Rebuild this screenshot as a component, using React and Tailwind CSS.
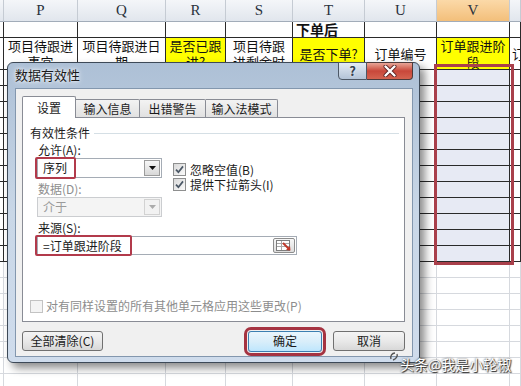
import React from 'react';

// column widths of the visible sheet part (stub, P..V, W)
const COLS = ['w-[4px]', 'w-[74px]', 'w-[88px]', 'w-[60px]', 'w-[67px]', 'w-[72px]', 'w-[72px]', 'w-[73px]', 'w-[11px]'];
const LETTERS = ['', 'P', 'Q', 'R', 'S', 'T', 'U', 'V', ''];
const TITLES = ['', '项目待跟进事宜', '项目待跟进日期', '是否已跟进?', '项目待跟进剩余时', '是否下单?', '订单编号', '订单跟进阶段', '订单金额'];
const YELLOW = [3, 5, 7];

function HeaderRow() {
  return (
    <div className="flex h-[22px]">
      {COLS.map((w, i) => (
        <div
          key={i}
          className={`${w} flex-none flex items-center justify-center border-r border-b border-r-[#c5cbd3] border-b-[#a2acb9] font-['Liberation_Serif',serif] text-[15px] text-[#2a323c] ${
            i === 7 ? 'bg-linear-to-b from-[#fbd9a8] to-[#f3bf7a]' : 'bg-linear-to-b from-[#f4f6f9] to-[#e1e6ed]'
          }`}
        >
          {LETTERS[i]}
        </div>
      ))}
    </div>
  );
}

function Row({ tall, light, sel, children }) {
  return (
    <div className={`flex ${tall ? 'h-[32px]' : 'h-[16px]'}`}>
      {COLS.map((w, i) => (
        <div
          key={i}
          className={`${w} flex-none border-r border-b overflow-hidden ${light ? 'border-[#d6d9de]' : 'border-[#2a2a2a]'} ${
            sel && i === 7 ? 'bg-[#e7eaf4]' : ''
          }`}
        >
          {children && children(i)}
        </div>
      ))}
    </div>
  );
}

function Sheet() {
  return (
    <div className="flex flex-col font-['Noto_Sans_CJK_SC',sans-serif] text-[13px] text-[#111]">
      <HeaderRow />
      <Row>
        {(i) =>
          i === 5 ? <div className="pl-[3px] text-[14px] leading-[15px] font-bold whitespace-nowrap">下单后</div> : null
        }
      </Row>
      <Row tall>
        {(i) =>
          i === 0 ? null : (
            <div
              className={`h-full flex items-center leading-[16px] px-[2px] ${
                i === 8 ? 'justify-start whitespace-nowrap' : 'justify-center text-center break-all'
              } ${YELLOW.includes(i) ? 'bg-[#ffff00]' : ''}`}
            >
              {TITLES[i]}
            </div>
          )
        }
      </Row>
      {Array.from({ length: 12 }).map((_, r) => (
        <Row key={`d${r}`} sel />
      ))}
      {Array.from({ length: 8 }).map((_, r) => (
        <Row key={`l${r}`} light />
      ))}
    </div>
  );
}

function CheckBox({ checked, disabled }) {
  return (
    <span
      className={`w-[13px] h-[13px] flex-none border flex items-center justify-center ${
        disabled ? 'border-[#c3c3c3] bg-[#f4f4f4]' : 'border-[#8e8f8f] bg-linear-to-br from-[#d9d9d9] to-[#fafafa]'
      }`}
    >
      {checked && (
        <svg width="9" height="9" viewBox="0 0 9 9">
          <path d="M1 4.6 L3.4 7.2 L8 1.4" fill="none" stroke="#4b5866" strokeWidth="1.7" />
        </svg>
      )}
    </span>
  );
}

function DropBtn({ disabled }) {
  return (
    <span
      className={`ml-auto w-[16px] h-full flex-none flex items-center justify-center border ${
        disabled ? 'border-[#d2d2d2] bg-[#f2f2f2]' : 'border-[#9c9c9c] bg-linear-to-b from-[#f7f7f7] to-[#d8d8d8]'
      }`}
    >
      <svg width="7" height="4" viewBox="0 0 7 4">
        <path d="M0 0h7L3.5 4z" fill={disabled ? '#ababab' : '#111'} />
      </svg>
    </span>
  );
}

function RangeIcon() {
  return (
    <svg width="17" height="12" viewBox="0 0 17 12">
      <rect x="0.5" y="0.5" width="13" height="10" fill="#fff" stroke="#7d7d7d" />
      <path d="M1 3.5h12M1 6.5h12M5.5 1v9" stroke="#a9a9a9" />
      <path d="M7 3 L13 9" stroke="#c0392b" strokeWidth="2" />
      <path d="M10 10 L14.5 10.5 L14 6 z" fill="#c0392b" />
    </svg>
  );
}

function Dialog() {
  return (
    <div className="absolute left-[7px] top-[62px] w-[413px] h-[301px] rounded-[6px] border border-[#3d4957] bg-linear-to-b from-[#adc0d6] via-[#c9d7e7] to-[#cfdcec] shadow-[5px_5px_8px_rgba(0,0,0,0.45)] flex flex-col pl-[7px] pr-[6px] pb-[5px] font-['Noto_Sans_CJK_SC',sans-serif] text-[12px] leading-[14px] text-[#1b1b1b]">
      {/* title bar */}
      <div className="h-[25px] flex items-start">
        <span className="mt-[5px] text-[13px] text-[#1a1a1a] [text-shadow:0_0_6px_#ffffff,0_0_3px_#ffffff]">数据有效性</span>
        <div className="ml-auto -mt-px flex h-[18px]">
          <div className="w-[29px] h-full rounded-bl-[4px] border border-[#4d5866] bg-linear-to-b from-[#e3ebf4] to-[#b3c3d7] flex items-center justify-center text-[13px] font-bold text-[#34404e] [text-shadow:0_0_2px_#ffffff]">
            ?
          </div>
          <div className="w-[46px] h-full rounded-br-[4px] border border-l-0 border-[#4d3a3a] bg-linear-to-b from-[#e7a597] via-[#c8473a] to-[#d46350] flex items-center justify-center">
            <svg width="14" height="12" viewBox="0 0 14 12">
              <path d="M2.5 1.5 L11.5 10.5 M11.5 1.5 L2.5 10.5" stroke="#5a2222" strokeWidth="4" strokeLinecap="round" />
              <path d="M2.5 1.5 L11.5 10.5 M11.5 1.5 L2.5 10.5" stroke="#ffffff" strokeWidth="2.4" strokeLinecap="round" />
            </svg>
          </div>
        </div>
      </div>

      {/* client area */}
      <div className="flex-1 border border-[#8397ae] bg-[#f0f0f0] pl-[6px] pr-[7px] pt-[7px] flex flex-col">
        <div className="relative z-10 flex items-end h-[21px]">
          <div className="w-[54px] h-[22px] -mb-px bg-white border border-b-0 border-[#898c95] rounded-t-[2px] flex items-center justify-center">
            设置
          </div>
          <div className="w-[64px] h-[18px] border border-l-0 border-b-0 border-[#898c95] rounded-tr-[2px] bg-linear-to-b from-[#f3f3f3] to-[#e1e1e1] flex items-center justify-center">
            输入信息
          </div>
          <div className="w-[66px] h-[18px] border border-l-0 border-b-0 border-[#898c95] rounded-tr-[2px] bg-linear-to-b from-[#f3f3f3] to-[#e1e1e1] flex items-center justify-center">
            出错警告
          </div>
          <div className="w-[72px] h-[18px] border border-l-0 border-b-0 border-[#898c95] rounded-tr-[2px] bg-linear-to-b from-[#f3f3f3] to-[#e1e1e1] flex items-center justify-center">
            输入法模式
          </div>
        </div>

        <div className="h-[205px] border border-[#898c95] bg-white flex flex-col">
          <div className="flex items-center mt-[8px] pl-[7px] pr-[5px]">
            <span>有效性条件</span>
            <span className="flex-1 ml-[4px] h-px bg-[#d5dfe5]" />
          </div>

          <div className="pl-[14px] mt-[3px] flex flex-col">
            <span className="pl-[1px]">允许(A):</span>
            <div className="flex mt-[1px]">
              <div className="flex flex-col w-[125px]">
                <div className="relative h-[20px] border border-[#a5acb5] bg-white flex items-center p-px">
                  <span className="pl-[4px]">序列</span>
                  <DropBtn />
                  <span className="absolute left-[-3px] top-[-2px] w-[41px] h-[22px] border-2 border-[#b23a4b] rounded-[2px]" />
                </div>
                <span className="mt-[4px] pl-[1px] text-[#8e8e8e]">数据(D):</span>
                <div className="mt-[1px] h-[20px] border border-[#cbcdd0] bg-[#f4f4f4] flex items-center p-px text-[#9b9b9b]">
                  <span className="pl-[4px]">介于</span>
                  <DropBtn disabled />
                </div>
              </div>
              <div className="ml-[11px] pt-[5px] flex flex-col gap-[2px]">
                <div className="flex items-center gap-[4px] h-[13px]">
                  <CheckBox checked />
                  <span>忽略空值(B)</span>
                </div>
                <div className="flex items-center gap-[4px] h-[13px]">
                  <CheckBox checked />
                  <span>提供下拉箭头(I)</span>
                </div>
              </div>
            </div>
            <span className="mt-[4px] pl-[1px]">来源(S):</span>
            <div className="relative mt-[1px] w-[260px] h-[19px] border border-[#a5acb5] bg-white flex items-center p-px">
              <span className="pl-[4px]">=订单跟进阶段</span>
              <span className="ml-auto w-[22px] h-full border border-[#8d8d8d] rounded-[2px] bg-linear-to-b from-[#f7f7f7] to-[#dcdcdc] flex items-center justify-center">
                <RangeIcon />
              </span>
              <span className="absolute left-[-3px] top-[-2px] w-[97px] h-[21px] border-2 border-[#b23a4b] rounded-[2px]" />
            </div>
          </div>

          <div className="mt-auto mb-[8px] pl-[7px] flex items-center gap-[3px] text-[#8d8d8d]">
            <CheckBox disabled />
            <span>对有同样设置的所有其他单元格应用这些更改(P)</span>
          </div>
        </div>

        <div className="mt-[8px] h-[22px] flex items-center">
          <button className="w-[81px] h-[20px] rounded-[3px] border border-[#707070] bg-linear-to-b from-[#f4f4f4] via-[#e9e9e9] to-[#d8d8d8] flex items-center justify-center">
            全部清除(C)
          </button>
          <button className="ml-auto w-[74px] h-[21px] rounded-[3px] border border-[#3c7fb1] bg-linear-to-b from-[#eaf6fd] via-[#d9eefa] to-[#bee6fd] flex items-center justify-center shadow-[0_0_0_1px_#f0f0f0,0_0_0_4px_#a53341]">
            确定
          </button>
          <button className="ml-[11px] w-[72px] h-[20px] rounded-[3px] border border-[#707070] bg-linear-to-b from-[#f4f4f4] via-[#e9e9e9] to-[#d8d8d8] flex items-center justify-center">
            取消
          </button>
        </div>
      </div>
    </div>
  );
}

export default function App() {
  return (
    <div className="relative w-[521px] h-[386px] overflow-hidden bg-white">
      <Sheet />
      {/* selected range outline in column V */}
      <div className="absolute left-[434px] top-[64px] w-[80px] h-[201px] border-[3px] border-[#a9404b]" />
      <Dialog />
      {/* watermark */}
      <div className="absolute left-[389px] top-[350px] flex items-start gap-[1px] whitespace-nowrap font-['Noto_Sans_CJK_SC',sans-serif] text-[14px] leading-[20px] text-white [text-shadow:0_0_2px_#333,1px_1px_1px_#222]">
        <svg width="10" height="10" viewBox="0 0 10 10" className="mt-[1px]">
          <path d="M2 8 C1 5 3 2 6 2 M4 9 C7 8 9 5 8 3" fill="none" stroke="#555" strokeWidth="1.4" />
        </svg>
        <span className="mt-[4px]">头条@我是小轮椒</span>
      </div>
    </div>
  );
}
